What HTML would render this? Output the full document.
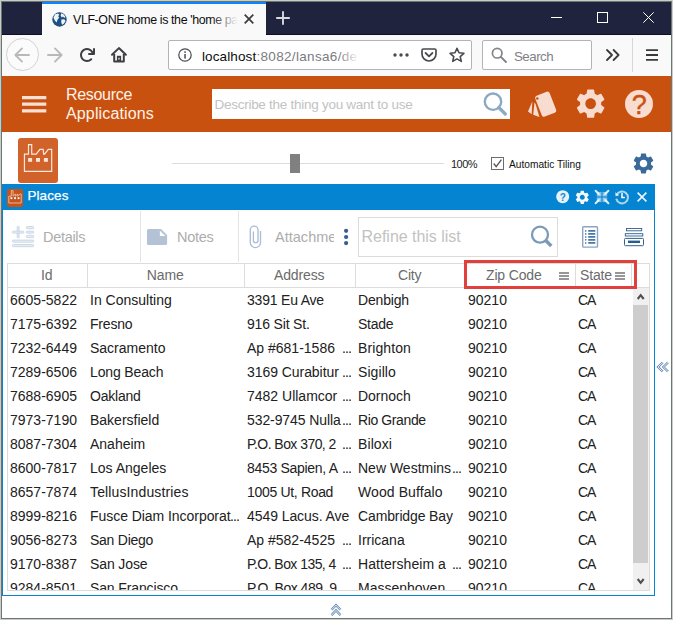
<!DOCTYPE html>
<html lang="en">
<head>
<meta charset="utf-8">
<title>VLF-ONE home is the 'home page'</title>
<style>
html,body{margin:0;padding:0;}
body{width:673px;height:620px;overflow:hidden;background:#fff;position:relative;
 font-family:"Liberation Sans",Arial,sans-serif;color:#212121;}
.a{position:absolute;}
.t{position:absolute;white-space:nowrap;}
svg{position:absolute;overflow:visible;}
/* window frame */
#frame-o{left:0;top:0;width:673px;height:620px;background:#cbcbcb;}
#frame-i{left:1px;top:1px;width:671px;height:618px;background:#6b786f;}
#win{left:2px;top:2px;width:669px;height:616px;background:#fff;overflow:hidden;}
/* everything inside #win is positioned in page coordinates via this shift */
#pg{left:-2px;top:-2px;width:673px;height:620px;}
/* browser chrome */
#titlebar{left:2px;top:2px;width:669px;height:33px;background:#20233e;border-bottom:1px solid #0e0f24;box-sizing:border-box;}
#tab{left:42px;top:2px;width:224px;height:33px;background:#f9f9fa;}
#tabline{left:42px;top:2px;width:224px;height:2px;background:#0a84ff;}
#navbar{left:2px;top:35px;width:669px;height:41px;background:#f9f9fa;}
.seg{font-family:"Liberation Sans",Arial,sans-serif;}
#urlbar{left:168px;top:40px;width:304px;height:30px;box-sizing:border-box;border:1px solid #b4b4b6;border-radius:2px;background:#fff;}
#srchbar{left:482px;top:40px;width:110px;height:30px;box-sizing:border-box;border:1px solid #b4b4b6;border-radius:2px;background:#fff;}
/* app header */
#apphdr{left:2px;top:76px;width:669px;height:56px;background:#c9510f;}
#appsearch{left:212px;top:89px;width:298px;height:30px;background:#fff;}
#tile{left:18px;top:138px;width:40px;height:45px;background:#d0622a;border-radius:3px;}
#bluebar{left:2px;top:184px;width:653px;height:26px;background:#0585d1;}
#panel{left:2px;top:210px;width:653px;height:386px;box-sizing:border-box;border:1px solid #0585d1;border-top:none;background:#fff;}
.vdiv{width:1px;top:211px;height:51px;background:#e4e4e4;}
#refine{left:358px;top:217px;width:200px;height:40px;box-sizing:border-box;border:1px solid #dcdcdc;background:#fff;}
/* grid */
#grid{left:7px;top:263px;width:643px;height:328px;box-sizing:border-box;border:1px solid #dcdcdc;background:#fff;overflow:hidden;}
#ghead{left:8px;top:264px;width:641px;height:23px;background:#fff;border-bottom:1px solid #dcdcdc;}
.hd{width:1px;top:264px;height:23px;background:#dcdcdc;}
.h{position:absolute;top:264px;height:23px;line-height:23px;font-size:14px;letter-spacing:-0.15px;color:#6b6b6b;text-align:center;white-space:nowrap;}
#rows{left:8px;top:288px;width:625px;height:302px;overflow:hidden;}
.r{position:absolute;left:0;width:625px;height:24px;line-height:24px;font-size:14px;color:#212121;white-space:nowrap;}
.r span.e2,.r span.e3,.r span.e4{letter-spacing:-0.9px;overflow:visible;}
.r span{position:absolute;top:0;white-space:nowrap;overflow:visible;}
.c1{left:2px;} .c2{left:82px;} .c3{left:239px;} .c4{left:350px;} .c5{left:460px;} .c6{left:570px;letter-spacing:-1.2px;}
.e3{left:334px;} .e4{left:444px;} .e2{left:222px;}
#sbar{left:633px;top:288px;width:16px;height:302px;background:#f0f0f0;}
#sthumb{left:633px;top:305px;width:15px;height:258px;background:#cdcdcd;}
#redbox{left:464px;top:260px;width:173px;height:29px;box-sizing:border-box;border:3px solid #e2403d;}
</style>
</head>
<body>
<div class="a" id="frame-o"></div>
<div class="a" id="frame-i"></div>
<div class="a" id="win"><div class="a" id="pg">

<!-- ===== Browser title bar ===== -->
<div class="a" id="titlebar"></div>
<div class="a" id="tab"></div>
<div class="a" id="tabline"></div>
<div class="a" id="navbar"></div>

<!-- tab contents -->
<svg style="left:51.5px;top:12.2px" width="15" height="15" viewBox="0 0 15 15">
  <circle cx="7.500" cy="7.500" r="7.200" fill="#1d4f80"/>
  <path d="M3.200 2.200 L5.800 1.400 L7.400 2.600 L6.200 4.200 L7.200 5.800 L5.600 7.600 L4.600 10.400 L2.800 8.400 L1.400 5.600 Z" fill="#eef3f8"/>
  <path d="M9.200 1.200 L11.800 2.600 L13.600 5.200 L12.200 5.800 L10.900 4.400 L9.900 5.600 L8.600 3.800 Z" fill="#eef3f8"/>
  <path d="M9.400 7.400 L12.200 7.200 L13.600 9 L11.800 11.800 L10 12.800 L9.200 10 Z" fill="#eef3f8"/>
</svg>
<div class="t seg" id="tabtitle" style="left:73px;top:10.7px;height:18px;line-height:18px;font-size:12.4px;color:#0c0c0d;width:165px;overflow:hidden;letter-spacing:-0.37px;">VLF-ONE home is the 'home page'</div>
<div class="a" style="left:211px;top:8px;width:28px;height:22px;background:linear-gradient(to right,rgba(249,249,250,0),rgba(249,249,250,1) 95%);"></div>
<svg style="left:244px;top:14px" width="10" height="10" viewBox="0 0 10 10"><path d="M0.7 0.7 L9.3 9.3 M9.3 0.7 L0.7 9.3" stroke="#3b3b3d" stroke-width="1.700" fill="none"/></svg>
<svg style="left:276px;top:11px" width="14" height="14" viewBox="0 0 14 14"><path d="M7 0.2 V13.800 M0.2 7 H13.800" stroke="#d9d9e0" stroke-width="1.900" fill="none"/></svg>
<!-- window controls -->
<svg style="left:551px;top:12px" width="11" height="11" viewBox="0 0 11 11"><path d="M0 5.5 H11" stroke="#fff" stroke-width="1"/></svg>
<svg style="left:597px;top:12px" width="11" height="11" viewBox="0 0 11 11"><rect x="0.5" y="0.5" width="10" height="10" stroke="#fff" stroke-width="1" fill="none"/></svg>
<svg style="left:643px;top:12px" width="11" height="11" viewBox="0 0 11 11"><path d="M0.3 0.3 L10.7 10.7 M10.7 0.3 L0.3 10.7" stroke="#fff" stroke-width="1" fill="none"/></svg>

<!-- nav bar -->
<div class="a" style="left:6px;top:38px;width:33px;height:33px;box-sizing:border-box;border:1px solid #d2d2d3;border-radius:50%;background:#fbfbfb;"></div>
<svg style="left:14px;top:47px" width="16" height="16" viewBox="0 0 16 16"><path d="M15 8 H1.6 M8 1.4 L1.4 8 L8 14.6" stroke="#b9b9ba" stroke-width="1.9" fill="none" stroke-linecap="round" stroke-linejoin="round"/></svg>
<svg style="left:47px;top:47px" width="16" height="16" viewBox="0 0 16 16"><path d="M1 8 H14.4 M8 1.4 L14.6 8 L8 14.6" stroke="#b9b9ba" stroke-width="1.9" fill="none" stroke-linecap="round" stroke-linejoin="round"/></svg>
<svg style="left:79.3px;top:47.2px" width="16" height="16" viewBox="0 0 16 16">
  <path fill="#3f3f42" d="M15 1a1 1 0 0 0-1 1v2.418A6.995 6.995 0 1 0 8 15a6.954 6.954 0 0 0 4.950-2.050 1 1 0 0 0-1.414-1.414A5.019 5.019 0 1 1 12.549 6H10a1 1 0 0 0 0 2h5a1 1 0 0 0 1-1V2a1 1 0 0 0-1-1z"/>
</svg>
<svg style="left:111px;top:47px" width="16" height="16" viewBox="0 0 16 16">
  <path d="M1 7.700 L7.900 1.100 L14.900 7.700" stroke="#3f3f42" stroke-width="2" fill="none" stroke-linecap="round" stroke-linejoin="round"/>
  <path d="M3.200 7 V14.500 H12.800 V7" stroke="#3f3f42" stroke-width="2" fill="none" stroke-linejoin="round"/>
  <rect x="5.900" y="8.800" width="4.200" height="6.200" fill="#3f3f42"/><rect x="7.400" y="10.800" width="1.200" height="1.700" fill="#f9f9fa"/>
</svg>
<div class="a" id="urlbar"></div>
<svg style="left:178px;top:48px" width="14" height="14" viewBox="0 0 14 14">
  <circle cx="7" cy="7" r="6.2" stroke="#4a4a4f" stroke-width="1.2" fill="none"/>
  <rect x="6.3" y="6" width="1.5" height="4.6" fill="#4a4a4f"/><rect x="6.3" y="3.3" width="1.5" height="1.6" fill="#4a4a4f"/>
</svg>
<div class="t seg" id="urltxt" style="left:202px;top:46.6px;height:20px;line-height:20px;font-size:13.5px;letter-spacing:0.12px;color:#0c0c0d;width:158px;overflow:hidden;">localhost<span style="color:#7b7b80;letter-spacing:0.33px">:8082/lansa6/dev</span></div>
<div class="a" style="left:338px;top:44px;width:24px;height:22px;background:linear-gradient(to right,rgba(255,255,255,0),#fff 90%);"></div>
<svg style="left:393px;top:53px" width="16" height="4" viewBox="0 0 16 4"><circle cx="2" cy="2" r="1.7" fill="#4a4a4f"/><circle cx="8" cy="2" r="1.7" fill="#4a4a4f"/><circle cx="14" cy="2" r="1.7" fill="#4a4a4f"/></svg>
<svg style="left:421px;top:48px" width="16" height="14" viewBox="0 0 16 14">
  <path d="M1 2.4 Q1 1 2.4 1 H13.6 Q15 1 15 2.4 V6 A7 7 0 0 1 1 6 Z" stroke="#4a4a4f" stroke-width="1.7" fill="none" stroke-linejoin="round"/>
  <path d="M4.6 5 L8 8.3 L11.4 5" stroke="#4a4a4f" stroke-width="1.8" fill="none" stroke-linecap="round" stroke-linejoin="round"/>
</svg>
<svg style="left:449px;top:47px" width="16" height="16" viewBox="0 0 16 16">
  <path d="M8 1.3 L10 5.8 L14.9 6.3 L11.2 9.6 L12.3 14.4 L8 11.9 L3.7 14.4 L4.8 9.6 L1.1 6.3 L6 5.8 Z" stroke="#4a4a4f" stroke-width="1.6" fill="none" stroke-linejoin="round"/>
</svg>
<div class="a" id="srchbar"></div>
<svg style="left:491px;top:47px" width="16" height="16" viewBox="0 0 16 16"><circle cx="6.2" cy="6.2" r="4.8" stroke="#828287" stroke-width="1.7" fill="none"/><path d="M9.8 9.8 L15 15" stroke="#828287" stroke-width="1.9" stroke-linecap="round"/></svg>
<div class="t seg" id="srchtxt" style="left:514px;top:46.6px;height:20px;line-height:20px;font-size:13.3px;letter-spacing:-0.5px;color:#808085;">Search</div>
<svg style="left:606px;top:49px" width="14" height="12" viewBox="0 0 14 12"><path d="M1 1 L6 6 L1 11 M7.6 1 L12.6 6 L7.6 11" stroke="#3a3a3c" stroke-width="1.8" fill="none" stroke-linecap="round" stroke-linejoin="round"/></svg>
<div class="a" style="left:632px;top:38px;width:1px;height:34px;background:#d7d7db;"></div>
<svg style="left:646px;top:49px" width="12" height="12" viewBox="0 0 12 12"><path d="M0 1.2 H12 M0 6 H12 M0 10.8 H12" stroke="#3a3a3c" stroke-width="1.8"/></svg>

<!-- ===== App header ===== -->
<div class="a" id="apphdr"></div>
<div class="a" id="appsearch"></div>

<svg style="left:21.8px;top:95.8px" width="24.300" height="18" viewBox="0 0 24.300 18"><path d="M0 1.600 H24.300 M0 8.200 H24.300 M0 14.800 H24.300" stroke="#f7dfd3" stroke-width="3.200"/></svg>
<div class="t" id="apptitle1" style="left:66px;top:85.2px;height:19px;line-height:19px;font-size:16px;letter-spacing:-0.31px;color:#fdf1ea;">Resource</div>
<div class="t" id="apptitle2" style="left:66px;top:103.8px;height:19px;line-height:19px;font-size:16px;letter-spacing:0.14px;color:#fdf1ea;">Applications</div>
<div class="t" id="appph" style="left:214.5px;top:94.8px;height:20px;line-height:20px;font-size:13.5px;letter-spacing:-0.27px;color:#c2c2c2;">Describe the thing you want to use</div>
<svg style="left:483px;top:92px" width="25" height="25" viewBox="0 0 25 25"><circle cx="10" cy="9.700" r="8.200" stroke="#8ba8c5" stroke-width="2.400" fill="none"/><path d="M15.800 15.500 L22.300 22" stroke="#8ba8c5" stroke-width="3.200" stroke-linecap="round"/></svg>
<!-- swatch / style icon -->
<svg style="left:0;top:0" width="673" height="140" viewBox="0 0 673 140">
  <path d="M532.300 101.600 L528 111.600 L531.700 114.200 Z" fill="#f8dccf"/>
  <path d="M534.500 102.600 L533.200 114.800 L539.400 117 L535.600 104 Z" fill="#f8dccf"/>
  <g transform="rotate(-21.500 545.700 104.200)"><rect x="538" y="93" width="15.400" height="22.400" rx="2.300" fill="#f8dccf"/></g>
  <circle cx="537.300" cy="98.400" r="1.250" fill="#c9510f"/>
</svg>
<!-- gear -->
<svg style="left:573.1px;top:86.2px" width="35.3" height="35.3" viewBox="0 0 24 24"><path fill="#f8dccf" d="M19.14 12.94c.04-.3.06-.61.06-.94 0-.32-.02-.64-.07-.94l2.03-1.58c.18-.14.23-.41.12-.61l-1.92-3.32c-.12-.22-.37-.29-.59-.22l-2.39.96c-.5-.38-1.03-.7-1.62-.94l-.36-2.54c-.04-.24-.24-.41-.48-.41h-3.84c-.24 0-.43.17-.47.41l-.36 2.54c-.59.24-1.13.57-1.62.94l-2.39-.96c-.22-.08-.47 0-.59.22L2.74 8.87c-.12.21-.08.47.12.61l2.03 1.58c-.05.3-.09.63-.09.94s.02.64.07.94l-2.03 1.58c-.18.14-.23.41-.12.61l1.92 3.32c.12.22.37.29.59.22l2.39-.96c.5.38 1.03.7 1.62.94l.36 2.54c.05.24.24.41.48.41h3.84c.24 0 .44-.17.47-.41l.36-2.54c.59-.24 1.13-.56 1.62-.94l2.39.96c.22.08.47 0 .59-.22l1.92-3.32c.12-.22.07-.47-.12-.61l-2.01-1.58zM12 15.6c-1.98 0-3.600-1.620-3.600-3.600s1.620-3.600 3.600-3.600 3.600 1.620 3.600 3.600-1.620 3.600-3.600 3.600z"/></svg>
<!-- help -->
<svg style="left:625px;top:90px" width="28" height="28" viewBox="0 0 28 28"><circle cx="14" cy="14" r="14" fill="#f8dccf"/>
<text x="14.200" y="24.200" text-anchor="middle" font-family="Liberation Sans,Arial,sans-serif" font-size="27" fill="#c9510f" stroke="#c9510f" stroke-width="0.4">?</text></svg>

<!-- ===== Tile row ===== -->
<div class="a" id="tile"></div>

<svg style="left:18px;top:138px" width="40" height="45" viewBox="0 0 40 45">
  <path d="M6.450 33.300 V16.100 H10.500 V6.600 H13.700 V16.100 H18.200 L21.900 11.300 H25.200 L25.600 16.100 H26.600 L30.300 11.300 H33.700 V33.300 Z" stroke="#fbe9df" stroke-width="1.200" fill="none" stroke-linejoin="miter"/>
  <rect x="10.100" y="20" width="4" height="3.800" fill="#f8e4d9"/><rect x="18" y="20" width="4" height="3.800" fill="#f8e4d9"/><rect x="25.900" y="20" width="4" height="3.800" fill="#f8e4d9"/>
</svg>
<!-- slider -->
<div class="a" style="left:172px;top:163px;width:272px;height:1px;background:#dcdcdc;"></div>
<div class="a" style="left:290px;top:154px;width:10px;height:19px;background:#808080;"></div>
<div class="t" id="pct" style="left:451px;top:156px;height:16px;line-height:16px;font-size:11px;letter-spacing:-0.55px;color:#222;">100%</div>
<div class="a" style="left:491px;top:157px;width:13px;height:13px;box-sizing:border-box;border:1px solid #6c6c6c;background:#fff;"></div>
<svg style="left:491px;top:157px" width="13" height="13" viewBox="0 0 13 13"><path d="M2.700 6.500 L5.200 9.700 L10.400 2.700" stroke="#595959" stroke-width="1.400" fill="none"/></svg>
<div class="t" id="autot" style="left:509px;top:156.5px;height:16px;line-height:16px;font-size:10.2px;color:#111;">Automatic Tiling</div>
<svg style="left:630.6px;top:151.4px" width="25" height="25" viewBox="0 0 24 24"><path fill="#3a6a99" d="M19.14 12.94c.04-.3.06-.61.06-.94 0-.32-.02-.64-.07-.94l2.03-1.58c.18-.14.23-.41.12-.61l-1.92-3.32c-.12-.22-.37-.29-.59-.22l-2.39.96c-.5-.38-1.03-.7-1.62-.94l-.36-2.54c-.04-.24-.24-.41-.48-.41h-3.84c-.24 0-.43.17-.47.41l-.36 2.54c-.59.24-1.13.57-1.62.94l-2.39-.96c-.22-.08-.47 0-.59.22L2.74 8.87c-.12.21-.08.47.12.61l2.03 1.58c-.05.3-.09.63-.09.94s.02.64.07.94l-2.03 1.58c-.18.14-.23.41-.12.61l1.92 3.32c.12.22.37.29.59.22l2.39-.96c.5.38 1.03.7 1.62.94l.36 2.54c.05.24.24.41.48.41h3.84c.24 0 .44-.17.47-.41l.36-2.54c.59-.24 1.13-.56 1.62-.94l2.39.96c.22.08.47 0 .59-.22l1.92-3.32c.12-.22.07-.47-.12-.61l-2.01-1.58zM12 15.6c-1.98 0-3.600-1.620-3.600-3.600s1.620-3.600 3.600-3.600 3.600 1.620 3.600 3.600-1.620 3.600-3.600 3.600z"/></svg>

<!-- ===== Places panel ===== -->
<div class="a" id="bluebar"></div>
<div class="a" id="panel"></div>

<!-- blue bar contents -->
<div class="a" style="left:7px;top:189px;width:16px;height:17.5px;background:#c5531a;border-radius:2px;"></div>
<svg style="left:7px;top:189px" width="16" height="18" viewBox="0 0 16 18">
  <path d="M1.800 14 V7.200 H4.300 V1.600 H6.100 V7.200 L8.300 5 V7.200 L10.700 5 V7.200 L13 5 H14.200 V14 Z" stroke="#eebfa6" stroke-width="0.9" fill="none"/>
  <rect x="3.500" y="8.200" width="1.900" height="1.900" fill="#f0f6fb"/><rect x="7.050" y="8.200" width="1.900" height="1.900" fill="#f0f6fb"/><rect x="10.600" y="8.200" width="1.900" height="1.900" fill="#f0f6fb"/>
</svg>
<div class="t" id="places" style="left:27.4px;top:185.8px;height:20px;line-height:20px;font-size:13.4px;letter-spacing:0.16px;color:#fff;-webkit-text-stroke:0.25px #fff;">Places</div>
<svg style="left:555.6px;top:190.4px" width="13.400" height="13.400" viewBox="0 0 14 14"><circle cx="7" cy="7" r="6.800" fill="#e6f2fa"/>
<text x="7" y="11" text-anchor="middle" font-family="Liberation Sans,Arial,sans-serif" font-weight="bold" font-size="10.5" fill="#1787cf">?</text></svg>
<svg style="left:573.9px;top:189px" width="16.600" height="16.600" viewBox="0 0 24 24"><path fill="#f4f9fd" d="M19.14 12.94c.04-.3.06-.61.06-.94 0-.32-.02-.64-.07-.94l2.03-1.58c.18-.14.23-.41.12-.61l-1.92-3.32c-.12-.22-.37-.29-.59-.22l-2.39.96c-.5-.38-1.03-.7-1.62-.94l-.36-2.54c-.04-.24-.24-.41-.48-.41h-3.84c-.24 0-.43.17-.47.41l-.36 2.54c-.59.24-1.13.57-1.62.94l-2.39-.96c-.22-.08-.47 0-.59.22L2.74 8.87c-.12.21-.08.47.12.61l2.03 1.58c-.05.3-.09.63-.09.94s.02.64.07.94l-2.03 1.58c-.18.14-.23.41-.12.61l1.92 3.32c.12.22.37.29.59.22l2.39-.96c.5.38 1.03.7 1.62.94l.36 2.54c.05.24.24.41.48.41h3.84c.24 0 .44-.17.47-.41l.36-2.54c.59-.24 1.13-.56 1.62-.94l2.39.96c.22.08.47 0 .59-.22l1.92-3.32c.12-.22.07-.47-.12-.61l-2.01-1.58zM12 15.6c-1.98 0-3.600-1.620-3.600-3.600s1.620-3.600 3.600-3.600 3.600 1.620 3.600 3.600-1.620 3.600-3.600 3.600z"/></svg>
<svg style="left:594px;top:189px" width="16" height="16" viewBox="0 0 16 16">
  <g fill="#fff" fill-opacity="0.5"><rect x="2.800" y="2.900" width="4.700" height="4.600"/><rect x="8.500" y="2.900" width="4.700" height="4.600"/><rect x="2.800" y="8.500" width="4.700" height="4.600"/><rect x="8.500" y="8.500" width="4.700" height="4.600"/></g>
  <path d="M1.600 1.700 L4.600 4.700 M14.400 1.700 L11.400 4.700 M1.600 14.300 L4.600 11.300 M14.400 14.300 L11.400 11.300" stroke="#fff" stroke-opacity="0.85" stroke-width="2" stroke-linecap="round" fill="none"/>
  <path d="M4.600 4.700 L6.400 6.500 M11.400 4.700 L9.600 6.500 M4.600 11.300 L6.400 9.500 M11.400 11.300 L9.600 9.500" stroke="#fff" stroke-opacity="0.4" stroke-width="1.600" fill="none"/>
</svg>
<svg style="left:614px;top:189px" width="17" height="16" viewBox="0 0 17 16">
  <path d="M2.500 6.500 A5.900 5.900 0 1 1 2.300 9.800" stroke="#fff" stroke-opacity="0.68" stroke-width="2" fill="none"/>
  <path d="M1.200 3.300 L1.600 7.300 L5.400 6.200 Z" fill="#fff" fill-opacity="0.75"/>
  <path d="M8 4 V8.400 H10.900" stroke="#fff" stroke-width="1.500" fill="none"/>
</svg>
<svg style="left:637.3px;top:192.3px" width="10" height="10" viewBox="0 0 10 10"><path d="M0.6 0.6 L9.4 9.4 M9.4 0.6 L0.6 9.4" stroke="#f4f9fd" stroke-width="1.5" fill="none"/></svg>

<!-- toolbar -->
<svg style="left:12px;top:226px" width="22" height="21" viewBox="0 0 22 21">
  <g fill="#e8eef5" stroke="#bccbdc" stroke-width="0.7">
  <rect x="5.200" y="0.3" width="1.900" height="11.500" rx="0.6"/><rect x="0.4" y="5.200" width="11.500" height="1.900" rx="0.6"/>
  <rect x="14.300" y="0.5" width="7.400" height="2.200" rx="0.9"/><rect x="14.300" y="5.200" width="7.400" height="2" rx="0.9"/><rect x="14.300" y="9.400" width="7.400" height="2.200" rx="0.9"/>
  <rect x="0.4" y="14.100" width="21.300" height="2.100" rx="0.9"/><rect x="0.4" y="18.500" width="21.300" height="2.200" rx="0.9"/>
  </g>
</svg>
<div class="t tb" id="tb1" style="left:43px;top:226px;height:22px;line-height:22px;font-size:14.5px;letter-spacing:-0.3px;color:#adadad;">Details</div>
<div class="a vdiv" style="left:140px;"></div>
<svg style="left:147px;top:229px" width="21" height="16" viewBox="0 0 21 16"><path d="M1.600 0 H14 L20.100 6 V14.400 Q20.100 16 18.500 16 H1.600 Q0 16 0 14.400 V1.600 Q0 0 1.600 0 Z" fill="#b3c3d5"/><path d="M12.900 1.700 V6.900 H18.500 Z" fill="#fff"/></svg>
<div class="t tb" id="tb2" style="left:177px;top:226px;height:22px;line-height:22px;font-size:14.5px;letter-spacing:-0.3px;color:#adadad;">Notes</div>
<div class="a vdiv" style="left:238px;"></div>
<svg style="left:249px;top:225px" width="14" height="23" viewBox="0 0 14 23">
  <path d="M4.400 6.400 V15.400 A2.300 2.300 0 0 0 9 15.400 V5 A3.850 3.850 0 0 0 1.300 5 V17.500 A5.100 5.100 0 0 0 11.500 17.500 V6" stroke="#a9bdd4" stroke-width="1.350" fill="none"/>
</svg>
<div class="t tb" id="tb3" style="left:275px;top:226px;height:22px;line-height:22px;font-size:14.5px;letter-spacing:0.02px;color:#adadad;width:59px;overflow:hidden;">Attachments</div>
<svg style="left:343px;top:228px" width="6" height="18" viewBox="0 0 6 18"><circle cx="3.100" cy="2.800" r="2.100" fill="#33608f"/><circle cx="3.100" cy="9" r="2.100" fill="#33608f"/><circle cx="3.100" cy="15.100" r="2.100" fill="#33608f"/></svg>
<div class="a" id="refine"></div>
<div class="t" id="refph" style="left:361.6px;top:224.8px;height:24px;line-height:24px;font-size:16px;letter-spacing:-0.04px;color:#c2c2c2;">Refine this list</div>
<svg style="left:530px;top:225px" width="24" height="24" viewBox="0 0 24 24"><circle cx="10" cy="9.700" r="8" stroke="#7b9ab9" stroke-width="2.300" fill="none"/><path d="M15.500 15.300 L21.300 21.100" stroke="#7b9ab9" stroke-width="3.500"/></svg>
<!-- list icons -->
<svg style="left:582px;top:226px" width="17" height="22" viewBox="0 0 17 22">
  <rect x="0.7" y="0.7" width="14.800" height="20.400" rx="0.8" stroke="#8aa5c2" stroke-width="1.400" fill="#fff"/>
  <path d="M3 4.900 H4.400 M3 7.900 H4.400 M3 10.900 H4.400 M3 13.850 H4.400 M3 16.900 H4.400" stroke="#4a77a3" stroke-width="1.500"/>
  <path d="M6.200 4.900 H13.300 M6.200 7.900 H13.300 M6.200 10.900 H13.300 M6.200 13.850 H13.300 M6.200 16.900 H13.300" stroke="#4a77a3" stroke-width="1.700"/>
</svg>
<svg style="left:624px;top:228px" width="20" height="19" viewBox="0 0 20 19">
  <rect x="2.500" y="0.5" width="15.200" height="2.300" stroke="#2f5f8f" stroke-width="0.9" fill="#fff"/>
  <rect x="1.300" y="5.700" width="17.500" height="2.300" stroke="#2f5f8f" stroke-width="0.9" fill="#fff"/>
  <rect x="0.5" y="10.400" width="19" height="7.300" rx="1" stroke="#2f5f8f" stroke-width="1" fill="#fff"/>
  <rect x="4" y="12.600" width="12" height="2.400" fill="#2c5c8c"/>
</svg>

<!-- grid -->
<div class="a" id="grid"></div>
<div class="a" id="ghead"></div>
<div class="a hd" style="left:87px"></div>
<div class="a hd" style="left:244px"></div>
<div class="a hd" style="left:355px"></div>
<div class="a hd" style="left:465px"></div>
<div class="a hd" style="left:575px"></div>
<div class="a hd" style="left:631px"></div>
<div class="h" style="left:7.2px;width:79px">Id</div>
<div class="h" style="left:87.2px;width:156px">Name</div>
<div class="h" style="left:244.2px;width:110px">Address</div>
<div class="h" style="left:355.2px;width:109px">City</div>
<div class="h" id="hzip" style="left:486px;text-align:left">Zip Code</div>
<div class="h" id="hstate" style="left:580px;text-align:left">State</div>
<svg style="left:559px;top:272px" width="10" height="8" viewBox="0 0 10 8"><path d="M0 1 H10 M0 4 H10 M0 7 H10" stroke="#303030" stroke-width="1.150"/></svg>
<svg style="left:615px;top:272px" width="10" height="8" viewBox="0 0 10 8"><path d="M0 1 H10 M0 4 H10 M0 7 H10" stroke="#303030" stroke-width="1.150"/></svg>
<div class="a" id="rows">
<div class="r" style="top:0px"><span class="c1">6605-5822</span><span class="c2">In Consulting</span><span class="c3" style="letter-spacing:-0.200px">3391 Eu Ave</span><span class="c4" style="letter-spacing:-0.167px">Denbigh</span><span class="c5">90210</span><span class="c6">CA</span></div>
<div class="r" style="top:24px"><span class="c1">7175-6392</span><span class="c2" style="letter-spacing:-0.200px">Fresno</span><span class="c3" style="letter-spacing:-0.175px">916 Sit St.</span><span class="c4" style="letter-spacing:-0.250px">Stade</span><span class="c5">90210</span><span class="c6">CA</span></div>
<div class="r" style="top:48px"><span class="c1">7232-6449</span><span class="c2">Sacramento</span><span class="c3">Ap #681-1586</span><span class="e3">...</span><span class="c4" style="letter-spacing:0.107px">Brighton</span><span class="c5">90210</span><span class="c6">CA</span></div>
<div class="r" style="top:72px"><span class="c1">7289-6506</span><span class="c2" style="letter-spacing:-0.139px">Long Beach</span><span class="c3" style="letter-spacing:-0.058px">3169 Curabitur</span><span class="e3">...</span><span class="c4" style="letter-spacing:0.083px">Sigillo</span><span class="c5">90210</span><span class="c6">CA</span></div>
<div class="r" style="top:96px"><span class="c1">7688-6905</span><span class="c2" style="letter-spacing:-0.208px">Oakland</span><span class="c3">7482 Ullamcor</span><span class="e3">...</span><span class="c4" style="letter-spacing:-0.042px">Dornoch</span><span class="c5">90210</span><span class="c6">CA</span></div>
<div class="r" style="top:120px"><span class="c1">7973-7190</span><span class="c2">Bakersfield</span><span class="c3" style="letter-spacing:-0.096px">532-9745 Nulla</span><span class="e3">...</span><span class="c4" style="letter-spacing:-0.389px">Rio Grande</span><span class="c5">90210</span><span class="c6">CA</span></div>
<div class="r" style="top:144px"><span class="c1">8087-7304</span><span class="c2">Anaheim</span><span class="c3" style="letter-spacing:-0.550px">P.O. Box 370, 2</span><span class="e3">...</span><span class="c4" style="letter-spacing:0.100px">Biloxi</span><span class="c5">90210</span><span class="c6">CA</span></div>
<div class="r" style="top:168px"><span class="c1">8600-7817</span><span class="c2">Los Angeles</span><span class="c3" style="letter-spacing:-0.300px">8453 Sapien, A</span><span class="e3">...</span><span class="c4">New Westmins</span><span class="e4">...</span><span class="c5">90210</span><span class="c6">CA</span></div>
<div class="r" style="top:192px"><span class="c1">8657-7874</span><span class="c2" style="letter-spacing:0.133px">TellusIndustries</span><span class="c3" style="letter-spacing:-0.325px">1005 Ut, Road</span><span class="c4" style="letter-spacing:0.091px">Wood Buffalo</span><span class="c5">90210</span><span class="c6">CA</span></div>
<div class="r" style="top:216px"><span class="c1">8999-8216</span><span class="c2" style="letter-spacing:-0.050px">Fusce Diam Incorporat</span><span class="e2">...</span><span class="c3" style="letter-spacing:-0.071px">4549 Lacus. Ave</span><span class="c4" style="letter-spacing:-0.125px">Cambridge Bay</span><span class="c5">90210</span><span class="c6">CA</span></div>
<div class="r" style="top:240px"><span class="c1">9056-8273</span><span class="c2" style="letter-spacing:-0.250px">San Diego</span><span class="c3">Ap #582-4525</span><span class="e3">...</span><span class="c4">Irricana</span><span class="c5">90210</span><span class="c6">CA</span></div>
<div class="r" style="top:264px"><span class="c1">9170-8387</span><span class="c2" style="letter-spacing:-0.114px">San Jose</span><span class="c3" style="letter-spacing:-0.550px">P.O. Box 135, 4</span><span class="e3">...</span><span class="c4" style="letter-spacing:0.062px">Hattersheim a</span><span class="e4">...</span><span class="c5">90210</span><span class="c6">CA</span></div>
<div class="r" style="top:288px"><span class="c1">9284-8501</span><span class="c2" style="letter-spacing:-0.125px">San Francisco</span><span class="c3" style="letter-spacing:-0.500px">P.O. Box 489, 9</span><span class="e3">...</span><span class="c4">Massenhoven</span><span class="e4">...</span><span class="c5">90210</span><span class="c6">CA</span></div>
</div>
<div class="a" id="sbar"></div>
<div class="a" id="sthumb"></div>
<svg style="left:636.8px;top:293.4px" width="8" height="7" viewBox="0 0 8 7"><path d="M0.7 6 L3.700 2.100 L6.700 6" stroke="#505050" stroke-width="2.100" fill="none"/></svg>
<svg style="left:636.8px;top:578.4px" width="8" height="7" viewBox="0 0 8 7"><path d="M0.7 1 L3.700 4.900 L6.700 1" stroke="#505050" stroke-width="2.100" fill="none"/></svg>
<div class="a" id="redbox"></div>
<!-- side / bottom expanders -->
<svg style="left:656px;top:361px" width="14" height="12" viewBox="0 0 14 12">
  <path d="M6.700 1.500 L2.100 6 L6.700 10.500 M12 1.500 L7.400 6 L12 10.500" stroke="#5f86b0" stroke-width="2.300" fill="none" stroke-linejoin="miter"/>
  <path d="M6.700 1.500 L2.100 6 L6.700 10.500 M12 1.500 L7.400 6 L12 10.500" stroke="#fff" stroke-width="0.9" fill="none"/>
</svg>
<svg style="left:330px;top:603px" width="12" height="14" viewBox="0 0 12 14">
  <path d="M1.500 6.800 L6 2.200 L10.500 6.800 M1.500 12.100 L6 7.500 L10.500 12.100" stroke="#5f86b0" stroke-width="2.300" fill="none"/>
  <path d="M1.500 6.800 L6 2.200 L10.500 6.800 M1.500 12.100 L6 7.500 L10.500 12.100" stroke="#fff" stroke-width="0.9" fill="none"/>
</svg>

</div></div>
</body>
</html>
